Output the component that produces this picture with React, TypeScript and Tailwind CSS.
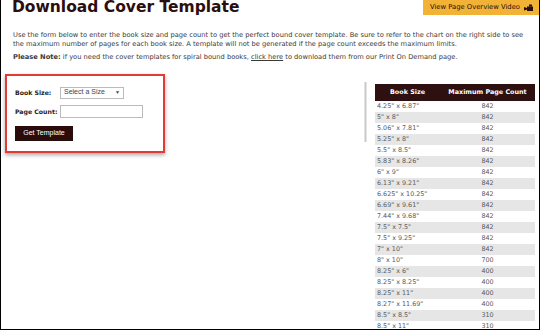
const sizes: [string, number][] = [
  ['4.25" x 6.87"', 842],
  ['5" x 8"', 842],
  ['5.06" x 7.81"', 842],
  ['5.25" x 8"', 842],
  ['5.5" x 8.5"', 842],
  ['5.83" x 8.26"', 842],
  ['6" x 9"', 842],
  ['6.13" x 9.21"', 842],
  ['6.625" x 10.25"', 842],
  ['6.69" x 9.61"', 842],
  ['7.44" x 9.68"', 842],
  ['7.5" x 7.5"', 842],
  ['7.5" x 9.25"', 842],
  ['7" x 10"', 842],
  ['8" x 10"', 700],
  ['8.25" x 6"', 400],
  ['8.25" x 8.25"', 400],
  ['8.25" x 11"', 400],
  ['8.27" x 11.69"', 400],
  ['8.5" x 8.5"', 310],
  ['8.5" x 11"', 310],
];

function CameraIcon() {
  return (
    <svg width="9" height="7" viewBox="0 0 9 7" className="ml-[4px]">
      <rect x="3" y="2.5" width="6" height="4.5" fill="#2a0f0f" />
      <rect x="5" y="0.5" width="3" height="2" fill="#2a0f0f" />
      <polygon points="0,3 3,4 3,5.5 0,6.5" fill="#2a0f0f" />
    </svg>
  );
}

export default function App() {
  return (
    <div className="w-[540px] h-[330px] overflow-hidden bg-white border-x border-b border-black font-['DejaVu_Sans',sans-serif] text-[#333]">
      <div className="flex items-start justify-between h-[31px]">
        <h1 className="pl-[11px] mt-[-2px] text-[15.5px] leading-[18px] font-bold text-[#2b0e0e]">
          Download Cover Template
        </h1>
        <div className="flex items-center h-[15px] pl-[7px] pr-[6px] bg-[#f2b235] text-[6.8px] text-[#2a0f0f]">
          View Page Overview Video
          <CameraIcon />
        </div>
      </div>

      <div className="pl-[12px] text-[6.7px] leading-[9px] whitespace-nowrap text-[#3a3a3a]">
        <p>
          Use the form below to enter the book size and page count to get the perfect bound cover template. Be sure to refer to the chart on the right side to see
        </p>
        <p>
          the maximum number of pages for each book size. A template will not be generated if the page count exceeds the maximum limits.
        </p>
        <p className="mt-[4px]">
          <span className="font-bold">Please Note:</span> if you need the cover templates for spiral bound books,{" "}
          <span className="underline">click here</span> to download them from our Print On Demand page.
        </p>
      </div>

      <div className="flex mt-[11px]">
        <div className="ml-[4px] mt-[1px] w-[160px] h-[79px] border-2 border-[#e23b35] shadow-[0_2px_4px_rgba(0,0,0,0.35)] pl-[8px] pt-[10px]">
          <div className="flex items-center h-[13px]">
            <span className="w-[45px] text-[6.2px] font-bold text-[#2a1a1a]">Book Size:</span>
            <div className="flex items-center justify-between w-[64px] h-[12px] border border-[#bbb] bg-white px-[3px] font-['Liberation_Sans',sans-serif] text-[7px] text-[#444]">
              Select a Size
              <span className="text-[5px]">▼</span>
            </div>
          </div>
          <div className="flex items-center h-[13px] mt-[6px]">
            <span className="w-[45px] text-[6.2px] font-bold text-[#2a1a1a]">Page Count:</span>
            <div className="w-[83px] h-[13px] border border-[#bbb] bg-white" />
          </div>
          <button className="mt-[8px] w-[58px] h-[15px] bg-[#2a0c0c] text-white font-['Liberation_Sans',sans-serif] text-[7px]">
            Get Template
          </button>
        </div>

        <div className="ml-[199px] mt-[9px] w-[3px] h-[60px] bg-gradient-to-r from-[#f2f2f2] via-[#c8c8c8] to-[#f4f4f4]" />

        <div className="ml-[8px] mt-[11px] w-[160px]">
          <div className="flex items-center h-[17px] bg-[#2e1010] text-white text-[6.4px] font-bold">
            <span className="w-[65px] text-center">Book Size</span>
            <span className="flex-1 text-center">Maximum Page Count</span>
          </div>
          {sizes.map(([size, count], i) => (
            <div
              key={size}
              className={`flex items-center h-[11px] text-[6.4px] text-[#5a5a5a] ${i % 2 === 1 ? "bg-[#e6e6e6]" : "bg-white"}`}
            >
              <span className="w-[65px] pl-[2px]">{size}</span>
              <span className="flex-1 text-center">{count}</span>
            </div>
          ))}
        </div>
      </div>
    </div>
  );
}
